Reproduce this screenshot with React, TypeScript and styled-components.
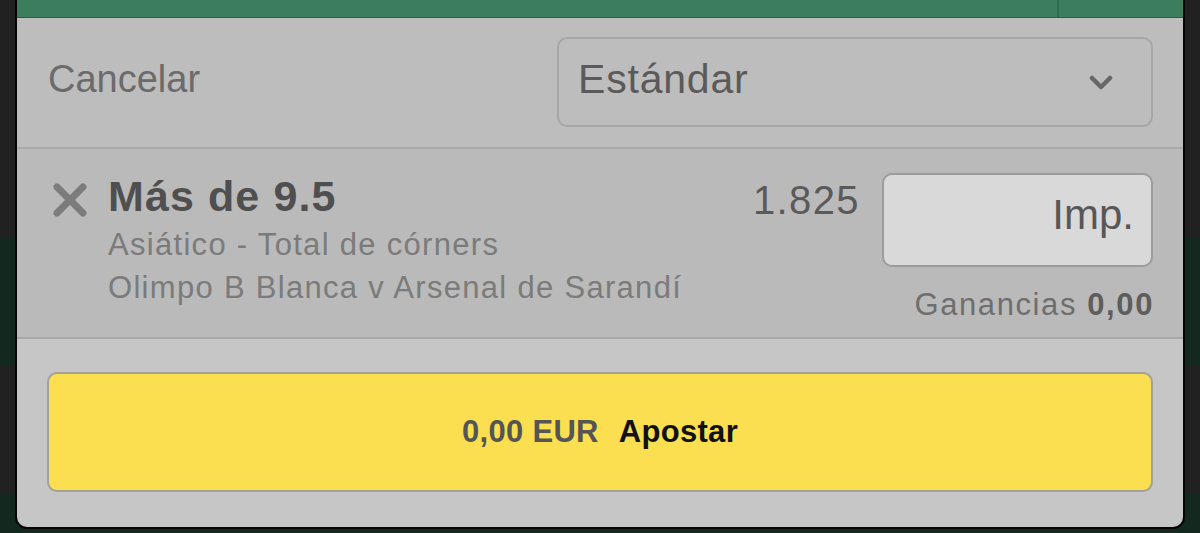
import * as React from "react"
import styled, { createGlobalStyle } from "styled-components"

const GlobalStyle = createGlobalStyle`
  html, body {
    margin: 0;
    padding: 0;
    width: 1200px;
    height: 533px;
    overflow: hidden;
    font-family: "Liberation Sans", Arial, sans-serif;
  }
`

// the page behind the sheet: dimmed rows of a list
const Backdrop = styled.div`
  width: 1200px;
  height: 533px;
  background: linear-gradient(
    to bottom,
    #212121 0px,
    #212121 237px,
    #13291f 237px,
    #13291f 365px,
    #212121 365px,
    #212121 493px,
    #13291f 493px
  );
`

const Sheet = styled.div`
  margin: 0 15px;
  border: 2px solid #050505;
  border-top: none;
  border-radius: 0 0 12px 12px;
  overflow: hidden;
  background: #c6c6c6;
`

const TopBar = styled.div`
  height: 17px;
  background: #3b7d5d;
  border-bottom: 1px solid #2b5e45;
  display: flex;
  justify-content: flex-end;
`

const TopBarDivider = styled.div`
  width: 2px;
  background: #2e6a4c;
  margin-right: 124px;
`

const Header = styled.div`
  height: 131px;
  background: #bdbdbd;
  border-bottom: 2px solid #a9a9a9;
  display: flex;
  align-items: center;
  justify-content: space-between;
  padding: 0 30px 0 31px;
  box-sizing: border-box;
`

const CancelLink = styled.span`
  font-size: 38px;
  color: #6b6b6b;
  margin-top: -6px;
`

const Select = styled.div`
  width: 596px;
  height: 90px;
  box-sizing: border-box;
  border: 2px solid #a6a6a6;
  border-radius: 10px;
  display: flex;
  align-items: center;
  justify-content: space-between;
  padding: 0 38px 0 19px;
  margin-top: -1px;
`

const SelectValue = styled.span`
  font-size: 41px;
  letter-spacing: 0.8px;
  color: #5a5a5a;
  margin-top: -6px;
`

const BetRow = styled.div`
  height: 190px;
  box-sizing: border-box;
  background: #bababa;
  border-bottom: 2px solid #a9a9a9;
  display: flex;
  padding: 24px 30px 0 36px;
`

const RemoveIcon = styled.svg`
  flex: none;
  width: 34px;
  height: 34px;
  margin-top: 10px;
  margin-right: 21px;
`

const BetInfo = styled.div`
  flex: 1;
  display: flex;
  flex-direction: column;
`

const Selection = styled.div`
  font-size: 43px;
  letter-spacing: 1.1px;
  font-weight: bold;
  color: #4f4f4f;
  line-height: 43px;
  margin: 2px 0 5px;
`

const Market = styled.div`
  font-size: 31px;
  letter-spacing: 1.3px;
  color: #7b7b7b;
  line-height: 43px;
`

const Odds = styled.div`
  font-size: 40px;
  letter-spacing: 1.4px;
  color: #5a5a5a;
  line-height: 43px;
  margin: 6px 22px 0 0;
`

const StakeColumn = styled.div`
  display: flex;
  flex-direction: column;
  align-items: flex-end;
`

const StakeInput = styled.div`
  width: 271px;
  height: 94px;
  box-sizing: border-box;
  background: #d9d9d9;
  border: 2px solid #9c9c9c;
  border-radius: 10px;
  display: flex;
  align-items: center;
  justify-content: flex-end;
  padding: 0 17px 10px 0;
  font-size: 42px;
  color: #575757;
`

const Winnings = styled.div`
  font-size: 31px;
  letter-spacing: 1.6px;
  color: #6e6e6e;
  margin-top: 20px;
  margin-right: -1px;

  b {
    color: #5d5d5d;
  }
`

const Footer = styled.div`
  height: 188px;
  box-sizing: border-box;
  padding: 33px 30px 0 30px;
`

const PlaceButton = styled.div`
  height: 120px;
  box-sizing: border-box;
  background: #fbdf50;
  border: 2px solid #a3a095;
  border-radius: 10px;
  display: flex;
  align-items: center;
  justify-content: center;
  font-size: 31px;
  letter-spacing: 0.3px;
  font-weight: bold;
  gap: 20px;
`

const Amount = styled.span<{ $muted?: boolean }>`
  color: ${p => (p.$muted ? "#555555" : "#111111")};
`

const Chevron = () => (
  <svg width="24" height="16" viewBox="0 0 24 16">
    <polyline points="3,4 12,13 21,4" fill="none" stroke="#676767" strokeWidth="4.5" strokeLinecap="round" strokeLinejoin="round" />
  </svg>
)

export default function App() {
  return (
    <>
      <GlobalStyle />
      <Backdrop>
        <Sheet>
          <TopBar>
            <TopBarDivider />
          </TopBar>
          <Header>
            <CancelLink>Cancelar</CancelLink>
            <Select>
              <SelectValue>Estándar</SelectValue>
              <Chevron />
            </Select>
          </Header>
          <BetRow>
            <RemoveIcon viewBox="0 0 34 34">
              <path d="M4 4 L30 30 M30 4 L4 30" stroke="#7c7c7c" strokeWidth="7" strokeLinecap="round" />
            </RemoveIcon>
            <BetInfo>
              <Selection>Más de 9.5</Selection>
              <Market>Asiático - Total de córners</Market>
              <Market>Olimpo B Blanca v Arsenal de Sarandí</Market>
            </BetInfo>
            <Odds>1.825</Odds>
            <StakeColumn>
              <StakeInput>Imp.</StakeInput>
              <Winnings>
                Ganancias <b>0,00</b>
              </Winnings>
            </StakeColumn>
          </BetRow>
          <Footer>
            <PlaceButton>
              <Amount $muted>0,00 EUR</Amount>
              <Amount>Apostar</Amount>
            </PlaceButton>
          </Footer>
        </Sheet>
      </Backdrop>
    </>
  )
}
